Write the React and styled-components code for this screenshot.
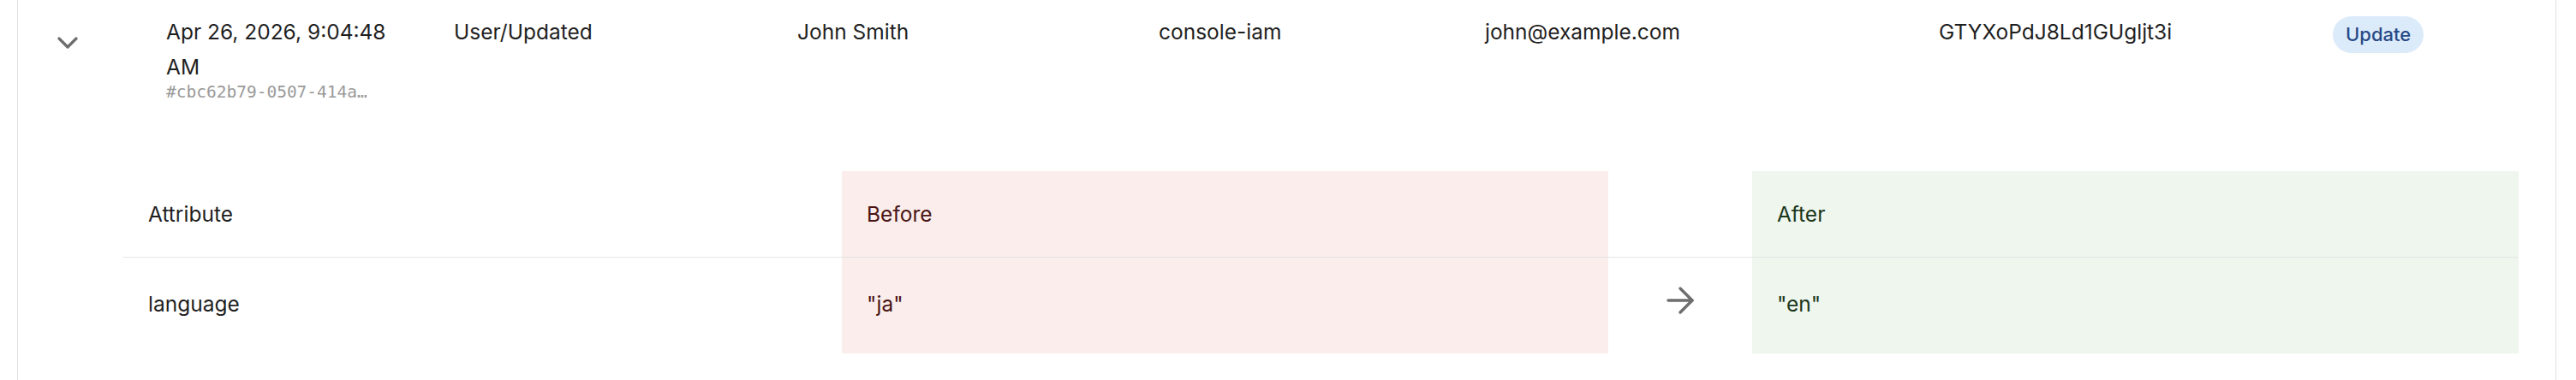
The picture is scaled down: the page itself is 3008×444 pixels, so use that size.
import React from "react";
import styled, { createGlobalStyle } from "styled-components";
import { ChevronDown, ArrowRight } from "lucide-react";

const GlobalStyle = createGlobalStyle`
  html, body {
    margin: 0;
    padding: 0;
    background: #ffffff;
  }
  body {
    font-family: Inter, "Noto Sans", "Liberation Sans", sans-serif;
    color: #1f1f1f;
    overflow: hidden;
  }
`;

const Card = styled.div`
  margin-left: 20px;
  width: 2965px;
  min-height: 460px;
  box-sizing: border-box;
  border-left: 1px solid #e2e2e2;
  border-right: 1px solid #e2e2e2;
  background: #fff;
`;

const Row = styled.div`
  display: grid;
  grid-template-columns: 173px 336px 401px 422px 381px 530px 460px 1fr;
  padding-top: 17px;
  font-size: 24.5px;
  line-height: 41px;
`;

const ToggleCell = styled.div`
  padding-left: 38px;
  padding-top: 13px;
  color: #6e6e6e;
  svg {
    display: block;
  }
`;

const Cell = styled.div`
  min-width: 0;
  white-space: ${(p) => (p.$wrap ? "normal" : "nowrap")};
`;

const DateText = styled.div`
  width: 272px;
`;

const Hash = styled.div`
  font-family: "DejaVu Sans Mono", "Liberation Mono", monospace;
  font-size: 19.5px;
  line-height: 18px;
  color: #9a9a9a;
  max-width: 240px;
  white-space: nowrap;
  overflow: hidden;
  text-overflow: ellipsis;
`;

const Badge = styled.span`
  display: inline-block;
  margin-top: 2px;
  padding: 6px 15px;
  border-radius: 999px;
  background: #dcebfa;
  color: #274a86;
  font-size: 22px;
  font-weight: 500;
  line-height: 31px;
`;

const Panel = styled.div`
  padding: 83px 43px 31px 123px;
`;

const DiffTable = styled.div`
  display: grid;
  grid-template-columns: 30fr 32fr 6fr 32fr;
  font-size: 24.5px;
`;

const tones = {
  before: { bg: "#faedeb", fg: "#4a1414" },
  after: { bg: "#eef6ee", fg: "#1b361b" },
};

const DiffCell = styled.div`
  display: flex;
  align-items: center;
  justify-content: ${(p) => (p.$center ? "center" : "flex-start")};
  padding: 0 ${(p) => (p.$center ? "0" : "29px")};
  padding-bottom: ${(p) => (p.$head ? "0" : p.$center ? "12px" : "4px")};
  height: ${(p) => (p.$head ? "100px" : p.$center ? "100px" : "108px")};
  border-bottom: ${(p) => (p.$head ? "1px solid #e4e4e4" : "none")};
  background: ${(p) => (p.$tone ? tones[p.$tone].bg : "transparent")};
  color: ${(p) => (p.$tone ? tones[p.$tone].fg : "#1f1f1f")};
  svg {
    color: #6e6e6e;
  }
`;

export default function App() {
  return (
    <>
      <GlobalStyle />
      <Card>
        <Row>
          <ToggleCell>
            <ChevronDown size={40} strokeWidth={2} />
          </ToggleCell>
          <Cell $wrap>
            <DateText>Apr 26, 2026, 9:04:48 AM</DateText>
            <Hash>#cbc62b79-0507-414a-9f3e-2b8d1c7a4e50</Hash>
          </Cell>
          <Cell>User/Updated</Cell>
          <Cell>John Smith</Cell>
          <Cell>console-iam</Cell>
          <Cell>john@example.com</Cell>
          <Cell>GTYXoPdJ8Ld1GUgljt3i</Cell>
          <Cell>
            <Badge>Update</Badge>
          </Cell>
        </Row>
        <Panel>
          <DiffTable>
            <DiffCell $head>Attribute</DiffCell>
            <DiffCell $head $tone="before">Before</DiffCell>
            <DiffCell $head $center />
            <DiffCell $head $tone="after">After</DiffCell>

            <DiffCell>language</DiffCell>
            <DiffCell $tone="before">"ja"</DiffCell>
            <DiffCell $center>
              <ArrowRight size={48} strokeWidth={1.75} />
            </DiffCell>
            <DiffCell $tone="after">"en"</DiffCell>
          </DiffTable>
        </Panel>
      </Card>
    </>
  );
}
